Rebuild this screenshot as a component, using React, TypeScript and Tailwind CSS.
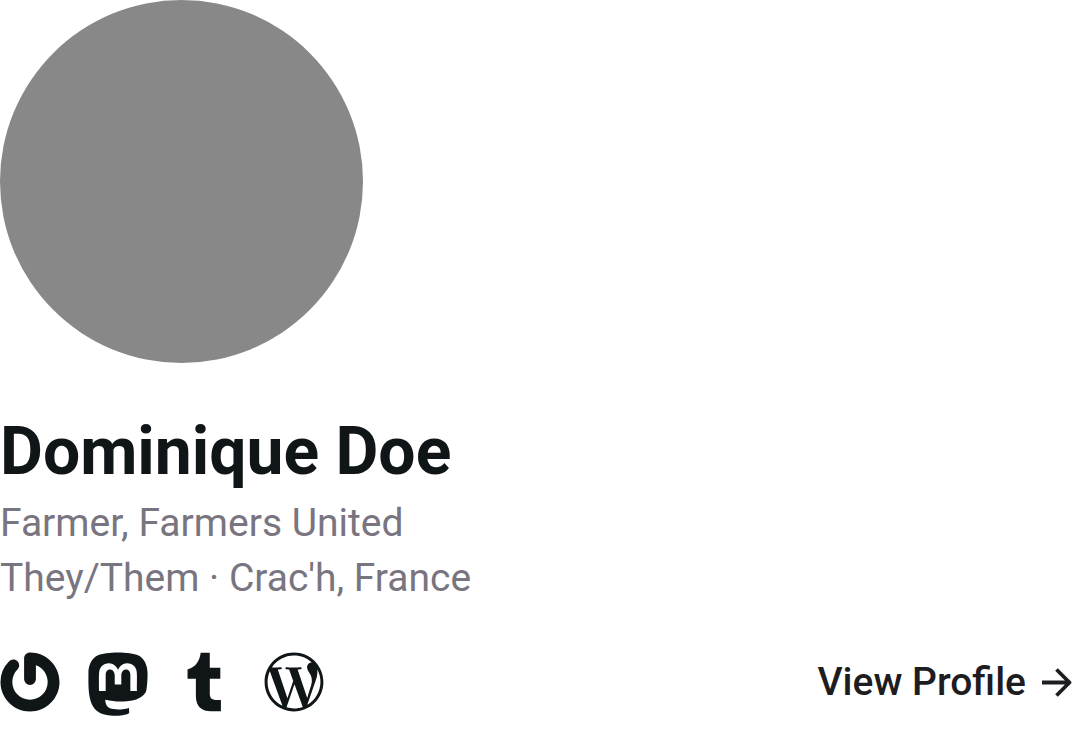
import React from "react";

const links = [
  {
    name: "Gravatar",
    viewBox: "-0.2 -0.2 24.4 24.4",
    path: "M12 0c-1.326 0-2.4 1.074-2.4 2.4v8.4a2.4 2.4 0 0 0 4.8 0V5.211c2.795.988 4.8 3.649 4.8 6.789 0 3.976-3.224 7.2-7.2 7.2S4.8 15.976 4.8 12c0-1.989.805-3.787 2.108-5.092.434-.434.7-1.034.7-1.697 0-1.326-1.074-2.4-2.4-2.4a2.393 2.393 0 0 0-1.693.7A11.96 11.96 0 0 0 0 12c0 6.627 5.373 12 12 12s12-5.373 12-12S18.627 0 12 0z",
  },
  {
    name: "Mastodon",
    viewBox: "12 29 424 424",
    path: "M433 179.11c0-97.2-63.71-125.7-63.71-125.7-62.52-28.7-228.56-28.4-290.48 0 0 0-63.72 28.5-63.72 125.7 0 115.7-6.6 259.4 105.63 289.1 40.51 10.7 75.32 13 103.33 11.4 50.81-2.8 79.32-18.1 79.32-18.1l-1.7-36.9s-36.31 11.4-77.12 10.1c-40.41-1.4-83-4.4-89.63-54a102.54 102.54 0 0 1-.9-13.9c85.63 20.9 158.65 9.1 178.75 6.7 56.12-6.7 105-41.3 111.23-72.9 9.8-49.8 9-121.5 9-121.5zm-75.12 125.2h-46.63v-114.2c0-49.7-64-51.6-64 6.9v62.5h-46.33V197c0-58.5-64-56.6-64-6.9v114.2H90.19c0-122.1-5.2-147.9 18.41-175 25.9-28.9 79.82-30.8 103.83 6.1l11.6 19.5 11.6-19.5c24.11-37.1 78.12-34.8 103.83-6.1 23.71 27.3 18.4 53 18.4 175z",
  },
  {
    name: "Tumblr",
    viewBox: "2.28 1.78 19.74 19.74",
    path: "M17.04 21.28h-3.28c-2.84 0-4.94-1.37-4.94-5.02v-5.67H6.08V7.5c2.93-.73 4.11-3.3 4.3-5.48h3.01v4.93h3.47v3.65H13.4v4.93c0 1.47.73 2.01 1.92 2.01h1.73v3.75z",
  },
  {
    name: "WordPress",
    viewBox: "1.8 1.8 20.4 20.4",
    path: "M12.158 12.786L9.46 20.625c.806.237 1.657.366 2.54.366 1.047 0 2.051-.181 2.986-.51-.024-.038-.046-.079-.065-.124L12.158 12.786zM3.009 12c0 3.559 2.068 6.634 5.067 8.092L3.788 8.341C3.289 9.459 3.009 10.696 3.009 12zM18.069 11.546c0-1.112-.399-1.881-.741-2.48-.456-.741-.883-1.368-.883-2.109 0-.826.627-1.596 1.51-1.596.04 0 .078.005.116.007C16.472 3.904 14.34 3.009 12 3.009c-3.141 0-5.904 1.612-7.512 4.052.211.007.41.011.579.011.94 0 2.396-.114 2.396-.114.484-.028.541.684.057.741 0 0-.487.057-1.029.085l3.274 9.739 1.968-5.901-1.401-3.838c-.484-.028-.943-.085-.943-.085-.485-.029-.428-.769.057-.741 0 0 1.484.114 2.368.114.94 0 2.397-.114 2.397-.114.485-.028.542.684.057.741 0 0-.488.057-1.029.085l3.249 9.665.897-2.996c.456-1.169.684-2.137.684-2.907zM19.889 7.686c.039.286.06.593.06.924 0 .912-.171 1.938-.684 3.22l-2.746 7.94c2.673-1.558 4.47-4.454 4.47-7.771.002-1.563-.398-3.032-1.1-4.313zM12 22C6.486 22 2 17.514 2 12 2 6.486 6.486 2 12 2c5.514 0 10 4.486 10 10 0 5.514-4.486 10-10 10z",
  },
];

export default function App() {
  return (
    <main className="flex min-h-screen flex-col items-start bg-white font-[Roboto,sans-serif] text-[#101517]">
      <div className="size-[363px] rounded-full bg-[#888888]" role="img" aria-label="Dominique Doe" />
      <h1 className="mt-12 text-[66px] leading-[81px] font-bold">Dominique Doe</h1>
      <div className="mt-1 text-[39px] leading-[55px] text-[#787580]">
        <p>Farmer, Farmers United</p>
        <p>They/Them · Crac'h, France</p>
      </div>
      <footer className="mt-[46px] flex w-full items-center justify-between">
        <nav className="flex items-center gap-7">
          {links.map((link) => (
            <a key={link.name} href={`#${link.name.toLowerCase()}`} aria-label={link.name}>
              <svg className="size-[60px] overflow-visible" viewBox={link.viewBox} fill="currentColor" aria-hidden="true">
                <path d={link.path} />
              </svg>
            </a>
          ))}
        </nav>
        <a href="#profile" className="flex items-center gap-4 pr-2 text-[39px] leading-[55px] font-medium text-[#1d1c20]">
          View Profile
          <svg className="size-[30px]" viewBox="0 0 30 30" fill="none" stroke="currentColor" strokeWidth="3.8" strokeLinejoin="round" aria-hidden="true">
            <path d="M0 15.5H27M14.5 2.5l13 13-13 13" />
          </svg>
        </a>
      </footer>
    </main>
  );
}
